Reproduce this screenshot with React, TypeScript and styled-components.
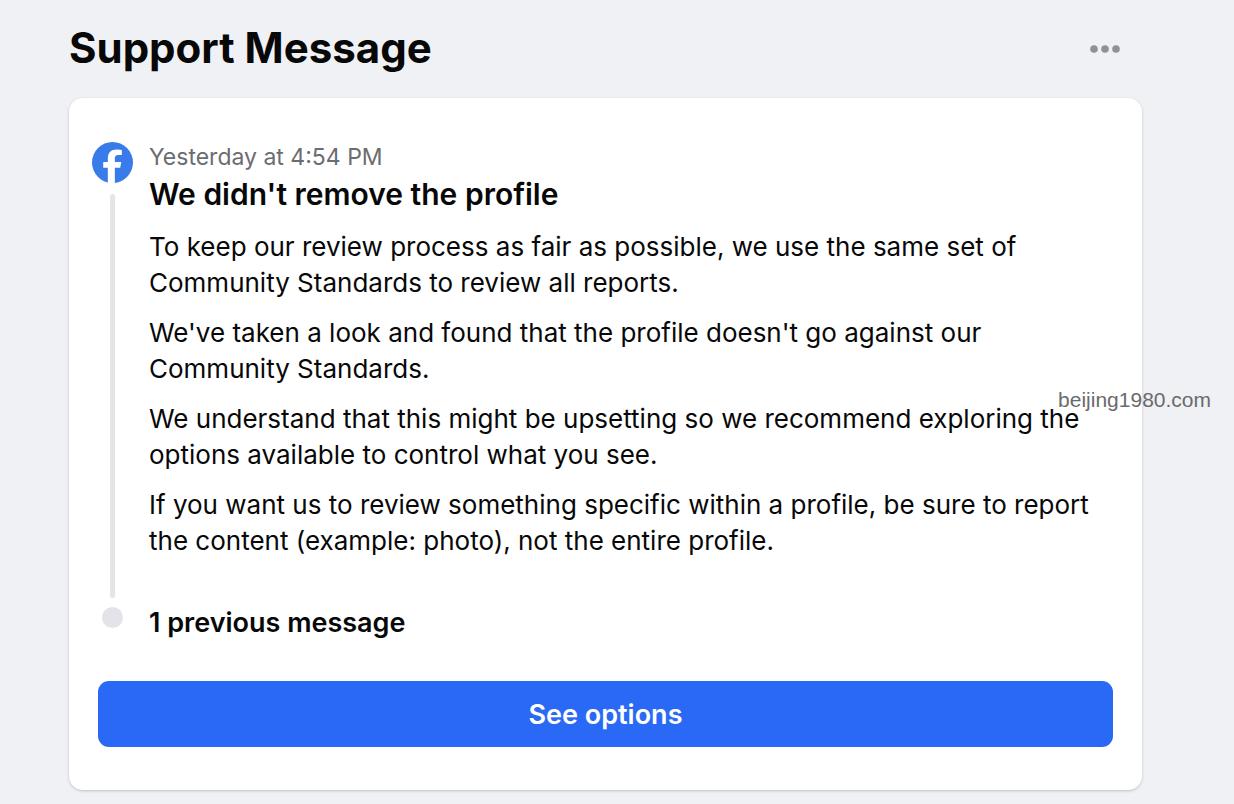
import React from 'react';
import styled, { createGlobalStyle } from 'styled-components';

const GlobalStyle = createGlobalStyle`
  * { box-sizing: border-box; }
  body {
    margin: 0;
    background: #f0f1f5;
    color: #080809;
    font-family: Inter, "Liberation Sans", sans-serif;
  }
`;

const Page = styled.main`
  position: relative;
  padding: 20px 92px 14px 69px;
`;

const Header = styled.header`
  display: flex;
  align-items: center;
  justify-content: space-between;
  height: 56px;
  margin-bottom: 22px;
  padding-right: 16px;
`;

const PageTitle = styled.h1`
  margin: 0;
  font-size: 42px;
  line-height: 56px;
  font-weight: 700;
`;

const MoreButton = styled.button`
  display: flex;
  padding: 8px 6px 6px;
  border: 0;
  background: none;
  color: #8f9196;
  cursor: pointer;
`;

const Card = styled.section`
  padding: 41px 29px 43px 23px;
  border-radius: 14px;
  background: #fff;
  box-shadow: 0 1px 3px rgba(0, 0, 0, 0.2);
`;

const Timeline = styled.div`
  display: grid;
  grid-template-columns: 41px 1fr;
  column-gap: 16px;
`;

const Rail = styled.div`
  display: flex;
  flex-direction: column;
  align-items: center;
  padding-top: 3px;
`;

const RailLine = styled.div`
  flex: 1;
  width: 5px;
  margin: 11px 0 7px;
  border-radius: 3px;
  background: #e4e5e8;
`;

const RailDot = styled.div`
  justify-self: center;
  width: 21px;
  height: 21px;
  margin-top: 2px;
  border-radius: 50%;
  background: #e3e3e9;
`;

const Message = styled.article`
  padding-bottom: 46px;
`;

const Timestamp = styled.time`
  display: block;
  color: #6b6c70;
  font-size: 23px;
  line-height: 37px;
`;

const MessageTitle = styled.h2`
  margin: 0 0 17px;
  font-size: 30px;
  line-height: 36px;
  font-weight: 600;
`;

const Paragraph = styled.p`
  margin: 0 0 14px;
  font-size: 26px;
  line-height: 36px;

  &:last-child { margin-bottom: 0; }
`;

const PreviousMessages = styled.h3`
  margin: 0;
  font-size: 27px;
  line-height: 36px;
  font-weight: 600;
`;

const PrimaryButton = styled.button`
  display: block;
  width: calc(100% - 6px);
  height: 66px;
  margin: 40px 0 0 6px;
  border: 0;
  border-radius: 11px;
  background: #2a69f6;
  color: #fff;
  font: inherit;
  font-size: 27px;
  font-weight: 600;
  cursor: pointer;
`;

const Watermark = styled.div`
  position: absolute;
  top: 388px;
  right: 23px;
  color: #6a6a6c;
  font-family: "Liberation Sans", Arial, sans-serif;
  font-size: 21px;
  line-height: 24px;
`;

const paragraphs = [
  'To keep our review process as fair as possible, we use the same set of Community Standards to review all reports.',
  "We've taken a look and found that the profile doesn't go against our Community Standards.",
  'We understand that this might be upsetting so we recommend exploring the options available to control what you see.',
  'If you want us to review something specific within a profile, be sure to report the content (example: photo), not the entire profile.',
];

const FacebookLogo = () => (
  <svg width="41" height="41" viewBox="0 0 42 42" role="img" aria-label="Facebook">
    <circle cx="21" cy="21" r="21" fill="#387be9" />
    <path
      d="M16.2 42V26.3H11.5V20.6H16.2V17.2C16.2 11 19.6 7.8 25.2 7.8C27.2 7.8 29.2 8 30.6 8.4V13.4H27.3C24.2 13.4 23.4 15 23.4 17.4V20.6H30L28.9 26.3H23.4V42Z"
      fill="#fff"
    />
  </svg>
);

const DotsIcon = () => (
  <svg width="30" height="8" viewBox="0 0 30 8" fill="currentColor" aria-hidden="true">
    <circle cx="4" cy="4" r="3.8" />
    <circle cx="15" cy="4" r="3.8" />
    <circle cx="26" cy="4" r="3.8" />
  </svg>
);

export default function App() {
  return (
    <>
      <GlobalStyle />
      <Page>
        <Header>
          <PageTitle>Support Message</PageTitle>
          <MoreButton type="button" aria-label="More options">
            <DotsIcon />
          </MoreButton>
        </Header>
        <Card>
          <Timeline>
            <Rail>
              <FacebookLogo />
              <RailLine />
            </Rail>
            <Message>
              <Timestamp>Yesterday at 4:54 PM</Timestamp>
              <MessageTitle>We didn't remove the profile</MessageTitle>
              {paragraphs.map((text) => (
                <Paragraph key={text}>{text}</Paragraph>
              ))}
            </Message>
            <RailDot />
            <PreviousMessages>1 previous message</PreviousMessages>
          </Timeline>
          <PrimaryButton type="button">See options</PrimaryButton>
        </Card>
        <Watermark>beijing1980.com</Watermark>
      </Page>
    </>
  );
}
